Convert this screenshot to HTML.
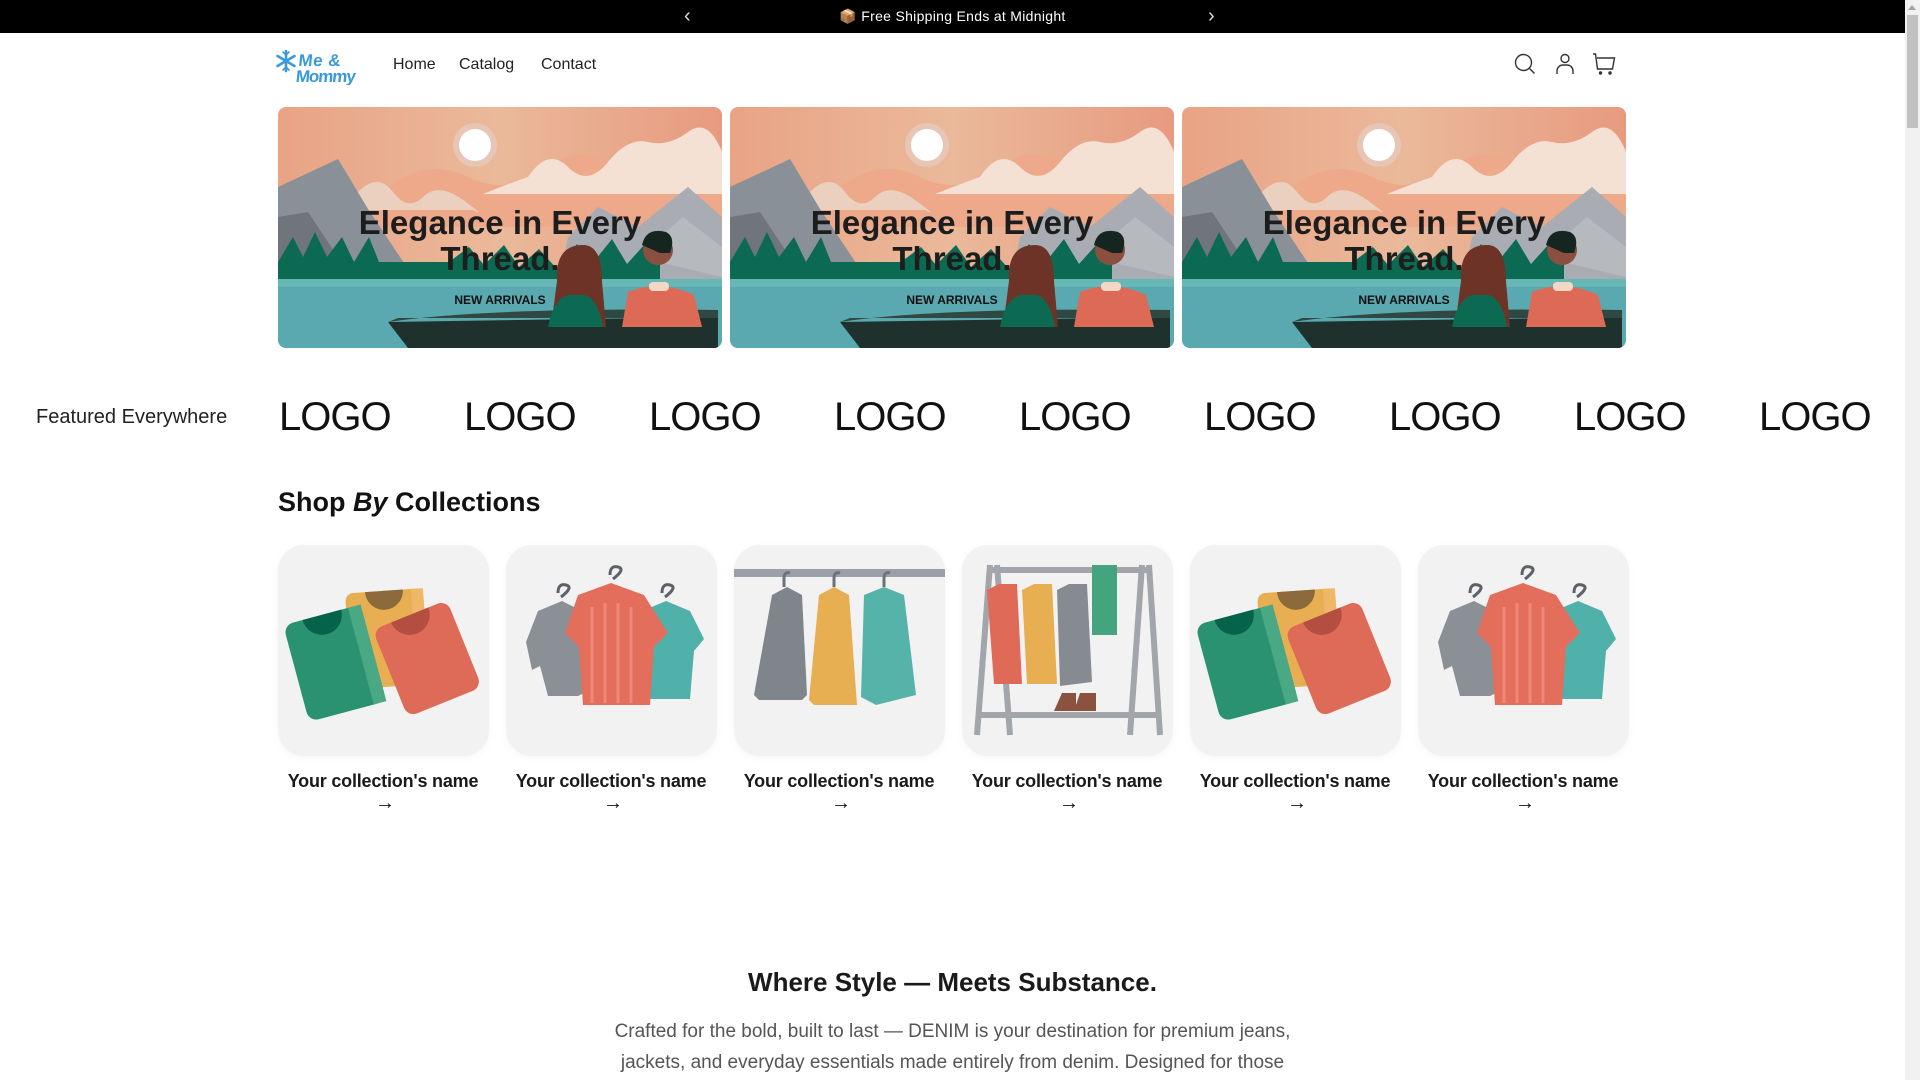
<!DOCTYPE html>
<html><head><meta charset="utf-8">
<style>
*{box-sizing:border-box;margin:0;padding:0}
html,body{width:1920px;height:1080px;overflow:hidden;background:#fff;font-family:"Liberation Sans",sans-serif;color:#121212}
.sb{position:absolute;right:0;top:0;width:15px;height:1080px;background:#f1f1f1}
.sb div{position:absolute;left:2px;top:15px;width:11px;height:113px;background:#c1c1c1}
.sb:before{content:"";position:absolute;left:3px;top:5px;border:4px solid transparent;border-bottom:5px solid #a3a3a3;border-top:0}
.ann{position:absolute;left:0;top:0;width:1905px;height:33px;background:#000;color:#fff;font-size:14px;text-align:center;line-height:33px;letter-spacing:.3px}
.ann .ar{position:absolute;top:0;font-size:20px;color:#ddd}
.logo{position:absolute;left:276px;top:47px;width:90px;height:38px}
.nav{position:absolute;top:56px;font-size:16px;color:#222}
.ic{position:absolute;top:53px}
.hero{position:absolute;top:107px;width:444px;height:241px;border-radius:8px;overflow:hidden}
.hero svg{position:absolute;left:0;top:0}
.ht{position:absolute;left:0;right:0;text-align:center;font-weight:bold;font-size:33px;line-height:36px;color:#1d1d1d}
.na{position:absolute;left:0;right:0;text-align:center;font-weight:bold;font-size:12px;color:#111}
.fe{position:absolute;left:36px;top:406px;font-size:20px;color:#222}
.lg{position:absolute;top:395px;font-size:40px;color:#111;letter-spacing:-1px}
.sh{position:absolute;left:278px;top:487px;font-size:27px;font-weight:bold}
.cc{position:absolute;top:545px;width:211px;height:211px;border-radius:26px;background:#f2f2f2;box-shadow:0 2px 8px rgba(0,0,0,.04);overflow:hidden}
.cn{position:absolute;top:771px;width:228px;text-align:center;font-weight:bold;font-size:18px;color:#1a1a1a;letter-spacing:-.2px}
.arw{position:absolute;top:792px;width:228px;text-align:center;font-size:20px}
.h2{position:absolute;left:0;width:1905px;text-align:center;top:967px;font-size:26px;font-weight:bold;color:#1a1a1a}
.p{position:absolute;left:600px;width:705px;text-align:center;top:1016px;font-size:19px;line-height:31px;color:#555}
</style></head><body>
<div class="sb"><div></div></div>
<div class="ann"><span class="ar" style="left:684px">‹</span>📦 Free Shipping Ends at Midnight<span class="ar" style="left:1208px">›</span></div>

<svg class="logo" viewBox="0 0 90 38"><g stroke="#3a9ad9" stroke-width="2.6" stroke-linecap="round"><line x1="10" y1="4" x2="10" y2="24"/><line x1="1.5" y1="9" x2="18.5" y2="19"/><line x1="1.5" y1="19" x2="18.5" y2="9"/><path d="M7 5l3 3 3-3M7 23l3-3 3 3" fill="none" stroke-width="1.6"/></g>
<text x="24" y="19" font-family="Liberation Sans" font-weight="bold" font-size="17" fill="#3a9ad9" transform="skewX(-6)" textLength="42">Me &amp;</text>
<text x="23" y="35" font-family="Liberation Sans" font-weight="bold" font-size="17" fill="#3a9ad9" transform="skewX(-6)" textLength="60">Mommy</text></svg>
<div class="nav" style="left:393px">Home</div>
<div class="nav" style="left:459px">Catalog</div>
<div class="nav" style="left:541px">Contact</div>
<svg class="ic" style="left:1514px" width="22" height="22" viewBox="0 0 22 22" fill="none" stroke="#333" stroke-width="1.4"><circle cx="9.5" cy="9.5" r="8"/><line x1="15.5" y1="15.5" x2="20.5" y2="20.5"/></svg>
<svg class="ic" style="left:1555px" width="20" height="22" viewBox="0 0 20 22" fill="none" stroke="#333" stroke-width="1.4"><circle cx="10" cy="5.5" r="4"/><path d="M2 21v-3a6 6 0 0 1 6-6h4a6 6 0 0 1 6 6v3"/></svg>
<svg class="ic" style="left:1592px" width="24" height="22" viewBox="0 0 24 22" fill="none" stroke="#333" stroke-width="1.4"><path d="M1 1h2.5l2 15h15l2-11H5"/><circle cx="8.5" cy="20" r="1" fill="#333"/><circle cx="18" cy="20" r="1" fill="#333"/></svg>

<svg width="0" height="0" style="position:absolute"><defs>
<linearGradient id="sky" x1="0" y1="0" x2="1" y2="0"><stop offset="0" stop-color="#e9a385"/><stop offset=".5" stop-color="#eab99a"/><stop offset="1" stop-color="#e89a7f"/></linearGradient>
<g id="scene">
<rect width="444" height="241" fill="url(#sky)"/>
<path d="M110 80q40-30 80-10t80-10 80 10 94-30v80H100z" fill="#eda98a"/>
<circle cx="197" cy="38" r="22" fill="#e7c6b5"/><circle cx="197" cy="38" r="16" fill="#fff"/>
<path d="M250 70q20-30 40-10t40-5 40-20 40-10 34 20v42H205q25-10 45-17z" fill="#f5e0d4"/>
<path d="M80 85q20-20 35 0t30 5 40 3 10 10H70z" fill="#ecd0bf"/>
<path d="M0 80l60-28 30 50 40 60H0z" fill="#8a9097"/>
<path d="M0 110l30-5 40 60H0z" fill="#6f757b"/>
<path d="M290 130l30-30 40 20 50-40 34 30v70H280z" fill="#a9adb3"/>
<path d="M360 150l45-40 39 30v30z" fill="#b6b9be"/>
<path d="M0 155l15-25 10 20 12-25 12 25 15-20 12 25 15-25 10 25h70l20-15 15 18 20-20 15 22 20-18 18 20 20-25 15 20 20-25 15 25 18-20 15 20v30H0z" fill="#0b6a51"/>
<rect y="172" width="444" height="69" fill="#5aa9b1"/>
<rect y="172" width="444" height="8" fill="#67b7b6"/>
<path d="M110 215l330-5v31H130z" fill="#1f312c"/>
<path d="M110 215q100-15 330-12v8H120z" fill="#2f4841"/>
<path d="M305 138q-28 0-26 36l-6 46h55l-4-46q0-36-19-36z" fill="#6e3327"/>
<path d="M290 188q-15 5-20 32h55q-5-28-18-32z" fill="#0b6a51"/>
<circle cx="380" cy="143" r="15" fill="#8a4f3e"/><path d="M364 138q4-18 24-13 10 5 4 21h-10z" fill="#14261f"/>
<path d="M350 185q32-13 66 3l8 32h-80z" fill="#dd6a57"/>
<rect x="371" y="175" width="20" height="9" rx="4" fill="#f3d8c6"/>
</g>
</defs></svg>

<div class="hero" style="left:278px"><svg width="444" height="241"><use href="#scene"/></svg><div class="ht" style="top:98px">Elegance in Every<br>Thread.</div><div class="na" style="top:186px">NEW ARRIVALS</div></div>
<div class="hero" style="left:730px"><svg width="444" height="241"><use href="#scene"/></svg><div class="ht" style="top:98px">Elegance in Every<br>Thread.</div><div class="na" style="top:186px">NEW ARRIVALS</div></div>
<div class="hero" style="left:1182px"><svg width="444" height="241"><use href="#scene"/></svg><div class="ht" style="top:98px">Elegance in Every<br>Thread.</div><div class="na" style="top:186px">NEW ARRIVALS</div></div>

<div class="fe">Featured Everywhere</div>
<div class="lg" style="left:279px">LOGO</div><div class="lg" style="left:464px">LOGO</div><div class="lg" style="left:649px">LOGO</div><div class="lg" style="left:834px">LOGO</div><div class="lg" style="left:1019px">LOGO</div><div class="lg" style="left:1204px">LOGO</div><div class="lg" style="left:1389px">LOGO</div><div class="lg" style="left:1574px">LOGO</div><div class="lg" style="left:1759px">LOGO</div>

<div class="sh">Shop <i>By</i> Collections</div>

<svg width="0" height="0" style="position:absolute"><defs>
<g id="fold">
<g transform="rotate(-4 105 90)"><rect x="70" y="46" width="78" height="96" rx="8" fill="#e8ae52"/><path d="M90 46h38a19 19 0 0 1-38 0z" fill="#8c6a3c"/><path d="M136 46h12v96h-12z" fill="#eeb866"/></g>
<g transform="rotate(-22 150 110)"><rect x="108" y="66" width="80" height="94" rx="10" fill="#de6b57"/><path d="M128 66h40a20 20 0 0 1-40 0z" fill="#b44e41"/></g>
<g transform="rotate(-15 57 115)"><rect x="16" y="68" width="80" height="100" rx="10" fill="#2a9270"/><path d="M36 68h40a20 20 0 0 1-40 0z" fill="#05634a"/><rect x="83" y="68" width="13" height="100" fill="#4aa884"/></g>
</g>
<g id="hang">
<g fill="none" stroke="#5d6268" stroke-width="3"><path d="M52 48q0-10 8-8t-5 12"/><path d="M104 30q0-10 8-8t-5 12"/><path d="M156 48q0-10 8-8t-5 12"/></g>
<path d="M32 66l24-10 20 10 6 80-10 5H42l-8-30-8 4-6-28z" fill="#8b9096"/>
<path d="M136 66l24-10 24 10 14 28-10 12-4 48H142z" fill="#4fb1a9"/>
<path d="M72 50l33-12 33 12 24 38-14 14-4 58H77l-4-58-14-14z" fill="#e46e5c"/>
<g stroke="#f08878" stroke-width="3"><line x1="86" y1="62" x2="86" y2="158"/><line x1="99" y1="58" x2="99" y2="158"/><line x1="112" y1="58" x2="112" y2="158"/><line x1="125" y1="62" x2="125" y2="158"/></g>
</g>
<g id="rail">
<rect x="0" y="24" width="211" height="8" fill="#9aa0a6"/>
<path d="M38 50l15-8 15 8 5 100-5 5H25l-5-5z" fill="#7f858b"/>
<path d="M85 50l15-8 15 8 8 110H80l-5-5z" fill="#e8ae52"/>
<path d="M130 50l20-8 20 8 12 100-40 10-15-8z" fill="#56b3aa"/>
<g fill="none" stroke="#6c7278" stroke-width="3"><path d="M50 42v-8q0-8 6-6"/><path d="M100 42v-8q0-8 6-6"/><path d="M150 42v-8q0-8 6-6"/></g>
</g>
<g id="rack">
<g stroke="#a2a6ab" stroke-width="6"><line x1="28" y1="20" x2="15" y2="190"/><line x1="35" y1="20" x2="48" y2="190"/><line x1="180" y1="20" x2="168" y2="190"/><line x1="187" y1="20" x2="198" y2="190"/><line x1="15" y1="170" x2="198" y2="170"/><line x1="30" y1="25" x2="185" y2="25"/></g>
<path d="M25 45l12-6h18l5 100H32z" fill="#e06a58"/><path d="M60 45l12-6h18l5 100H65z" fill="#e8ae52"/><path d="M95 45l12-6h18l5 98-32 4z" fill="#868b91"/>
<rect x="130" y="20" width="25" height="70" fill="#44a47f"/>
<path d="M100 148h14v18H92zM118 148h16v18h-22z" fill="#8b5240"/>
</g>
</defs></svg>

<div class="cc" style="left:278px"><svg width="211" height="211"><use href="#fold"/></svg></div>
<div class="cc" style="left:506px"><svg width="211" height="211"><use href="#hang"/></svg></div>
<div class="cc" style="left:734px"><svg width="211" height="211"><use href="#rail"/></svg></div>
<div class="cc" style="left:962px"><svg width="211" height="211"><use href="#rack"/></svg></div>
<div class="cc" style="left:1190px"><svg width="211" height="211"><use href="#fold"/></svg></div>
<div class="cc" style="left:1418px"><svg width="211" height="211"><use href="#hang"/></svg></div>

<div class="cn" style="left:269px">Your collection's name</div><div class="arw" style="left:271px">→</div>
<div class="cn" style="left:497px">Your collection's name</div><div class="arw" style="left:499px">→</div>
<div class="cn" style="left:725px">Your collection's name</div><div class="arw" style="left:727px">→</div>
<div class="cn" style="left:953px">Your collection's name</div><div class="arw" style="left:955px">→</div>
<div class="cn" style="left:1181px">Your collection's name</div><div class="arw" style="left:1183px">→</div>
<div class="cn" style="left:1409px">Your collection's name</div><div class="arw" style="left:1411px">→</div>

<div class="h2">Where Style — Meets Substance.</div>
<div class="p">Crafted for the bold, built to last — DENIM is your destination for premium jeans, jackets, and everyday essentials made entirely from denim. Designed for those</div>
</body></html>
